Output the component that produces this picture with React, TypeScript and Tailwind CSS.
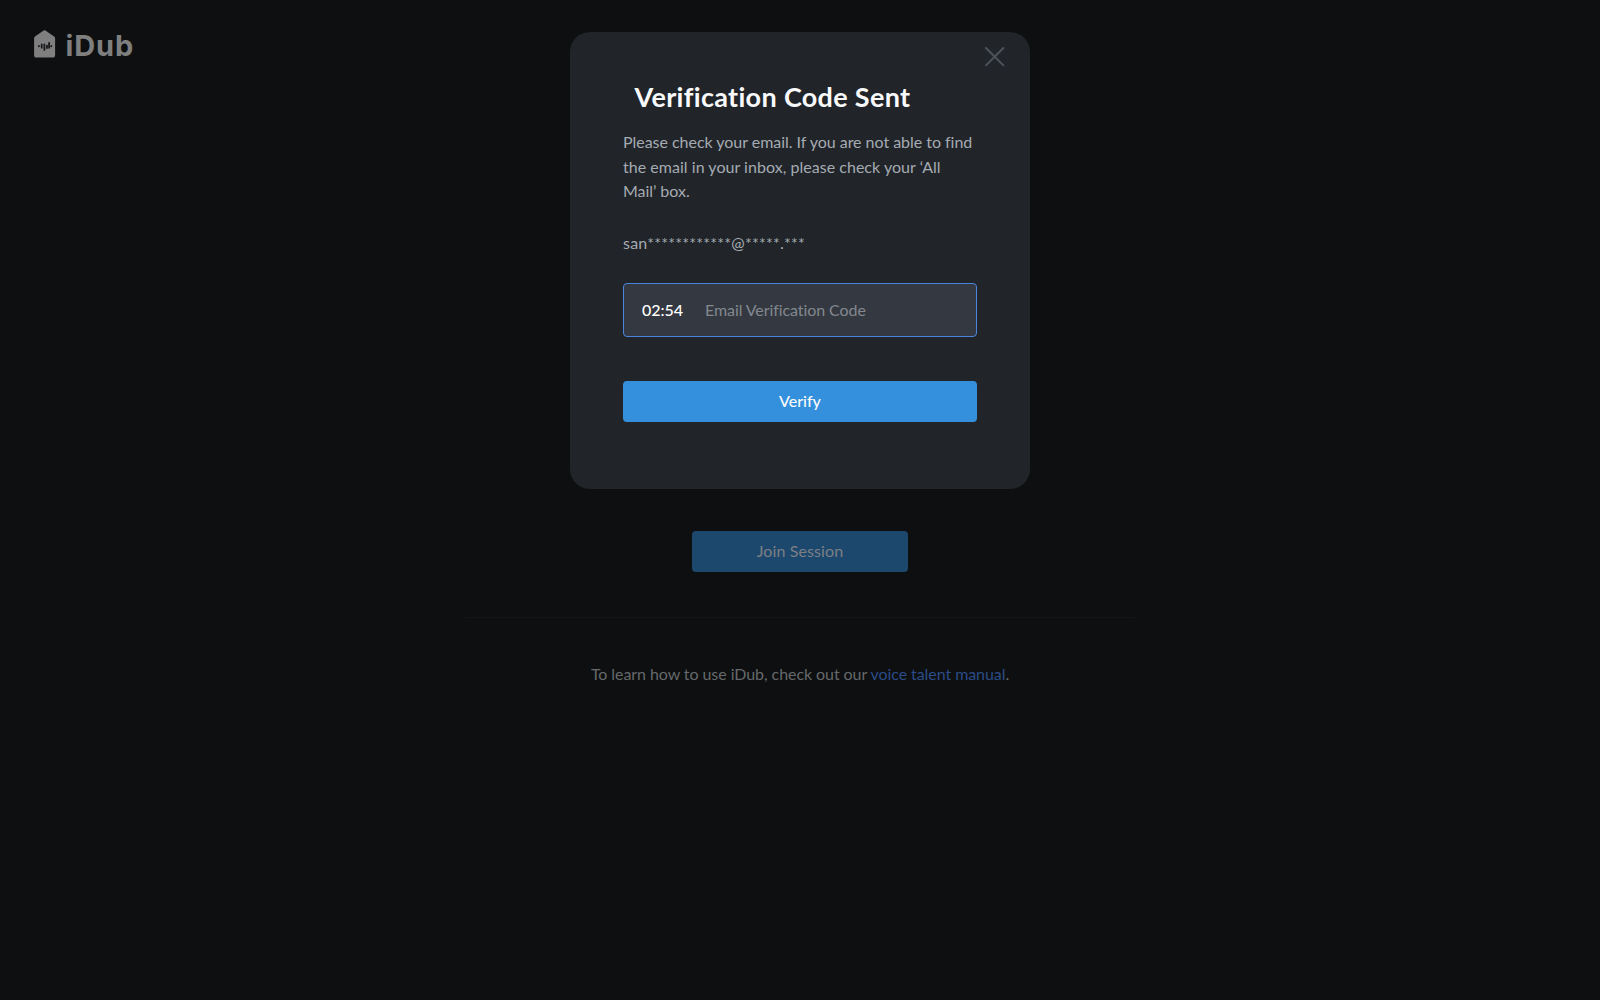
import { useState } from "react";

const MASKED_EMAIL = "san************@*****.***";

function Logo() {
  return (
    <div className="flex items-center text-[#7f7f80]">
      <svg width="22" height="28" viewBox="0 0 22 28" fill="none">
        <path
          d="M9.6 0.6a2 2 0 0 1 1.9 0l8.6 5.9A2 2 0 0 1 21.1 8.2V25.4A2.2 2.2 0 0 1 18.9 27.6H2.3A2.2 2.2 0 0 1 0.1 25.4V8.2A2 2 0 0 1 1 6.5Z"
          fill="currentColor"
        />
        <path
          d="M4.9 15.9v0.4M7.7 14.3v3.4M10.4 14.3v5.6M13 15.6v2.4M15.1 12.8v5M17.3 15.9v0.4"
          stroke="#17191a"
          strokeWidth="1.8"
          strokeLinecap="round"
        />
      </svg>
      <span className="ml-[9.5px] pt-[3px] font-['Inter',sans-serif] text-[29px] leading-[25px] font-bold tracking-[0.9px]">
        iDub
      </span>
    </div>
  );
}

function CloseIcon() {
  return (
    <svg width="20" height="20" viewBox="0 0 20 20" fill="none" stroke="#4d5359" strokeWidth="2" strokeLinecap="round">
      <path d="M1 1 18.4 18.4M18.4 1 1 18.4" />
    </svg>
  );
}

function VerifyDialog() {
  const [code, setCode] = useState("");

  return (
    <div
      role="dialog"
      className="relative h-[457px] w-[460px] rounded-[20px] bg-[#212429] px-[53px] pt-[45px]"
    >
      <button type="button" aria-label="Close" className="absolute top-[15px] right-[25px] cursor-pointer">
        <CloseIcon />
      </button>

      <h1 className="ml-[11.5px] text-[27px] leading-[40px] font-bold tracking-[0.32px] whitespace-nowrap text-[#f8f9fa]">
        Verification Code Sent
      </h1>

      <p className="mt-[13px] text-base leading-[24.6px] tracking-[-0.03px] whitespace-nowrap text-[#a5abb2]">
        Please check your email. If you are not able to find
        <br />
        <span className="tracking-[0.03px]">the email in your inbox, please check your ‘All</span>
        <br />
        Mail’ box.
      </p>

      <p className="mt-[27px] text-base leading-[24px] tracking-[0.22px] whitespace-nowrap text-[#a5abb2]">
        {MASKED_EMAIL}
      </p>

      <form onSubmit={(e) => e.preventDefault()}>
        <div className="mt-[28px] flex h-[54px] w-[354px] items-center rounded-[4px] border-[1.5px] border-[#4c84dc] bg-[#343840] pl-[18px]">
          <span className="w-[63px] text-base font-medium text-white">02:54</span>
          <input
            type="text"
            value={code}
            onChange={(e) => setCode(e.target.value)}
            placeholder="Email Verification Code"
            className="min-w-0 flex-1 bg-transparent text-base tracking-[-0.08px] text-white outline-none placeholder:text-[#82888f]"
          />
        </div>

        <button
          type="submit"
          className="mt-[44px] h-[41px] w-[354px] cursor-pointer rounded-[4px] bg-[#3490dc] text-base font-medium text-[#f8f9fa]"
        >
          Verify
        </button>
      </form>
    </div>
  );
}

export default function App() {
  return (
    <div className="relative h-[1000px] w-full overflow-hidden bg-[#0d0f10] font-['Lato','Open_Sans',sans-serif]">
      <header className="flex h-[58px] items-end pl-[34px]">
        <Logo />
      </header>

      <main className="flex flex-col items-center pt-[473px]">
        <button
          type="button"
          className="h-[41px] w-[216px] rounded-[4px] bg-[#1c486e] pb-[2px] text-base tracking-[0.1px] text-[#7c7f83]"
        >
          Join Session
        </button>
        <hr className="mt-[45px] w-[668px] border-[#131517]" />
        <p className="mt-[44px] text-base leading-[24px] tracking-[-0.07px] whitespace-nowrap text-[#66696b]">
          To learn how to use iDub, check out our <a className="text-[#2c4c87]">voice talent manual</a>.
        </p>
      </main>

      {/* Dialog layer */}
      <div className="absolute inset-0 flex items-start justify-center pt-[32px]">
        <VerifyDialog />
      </div>
    </div>
  );
}
